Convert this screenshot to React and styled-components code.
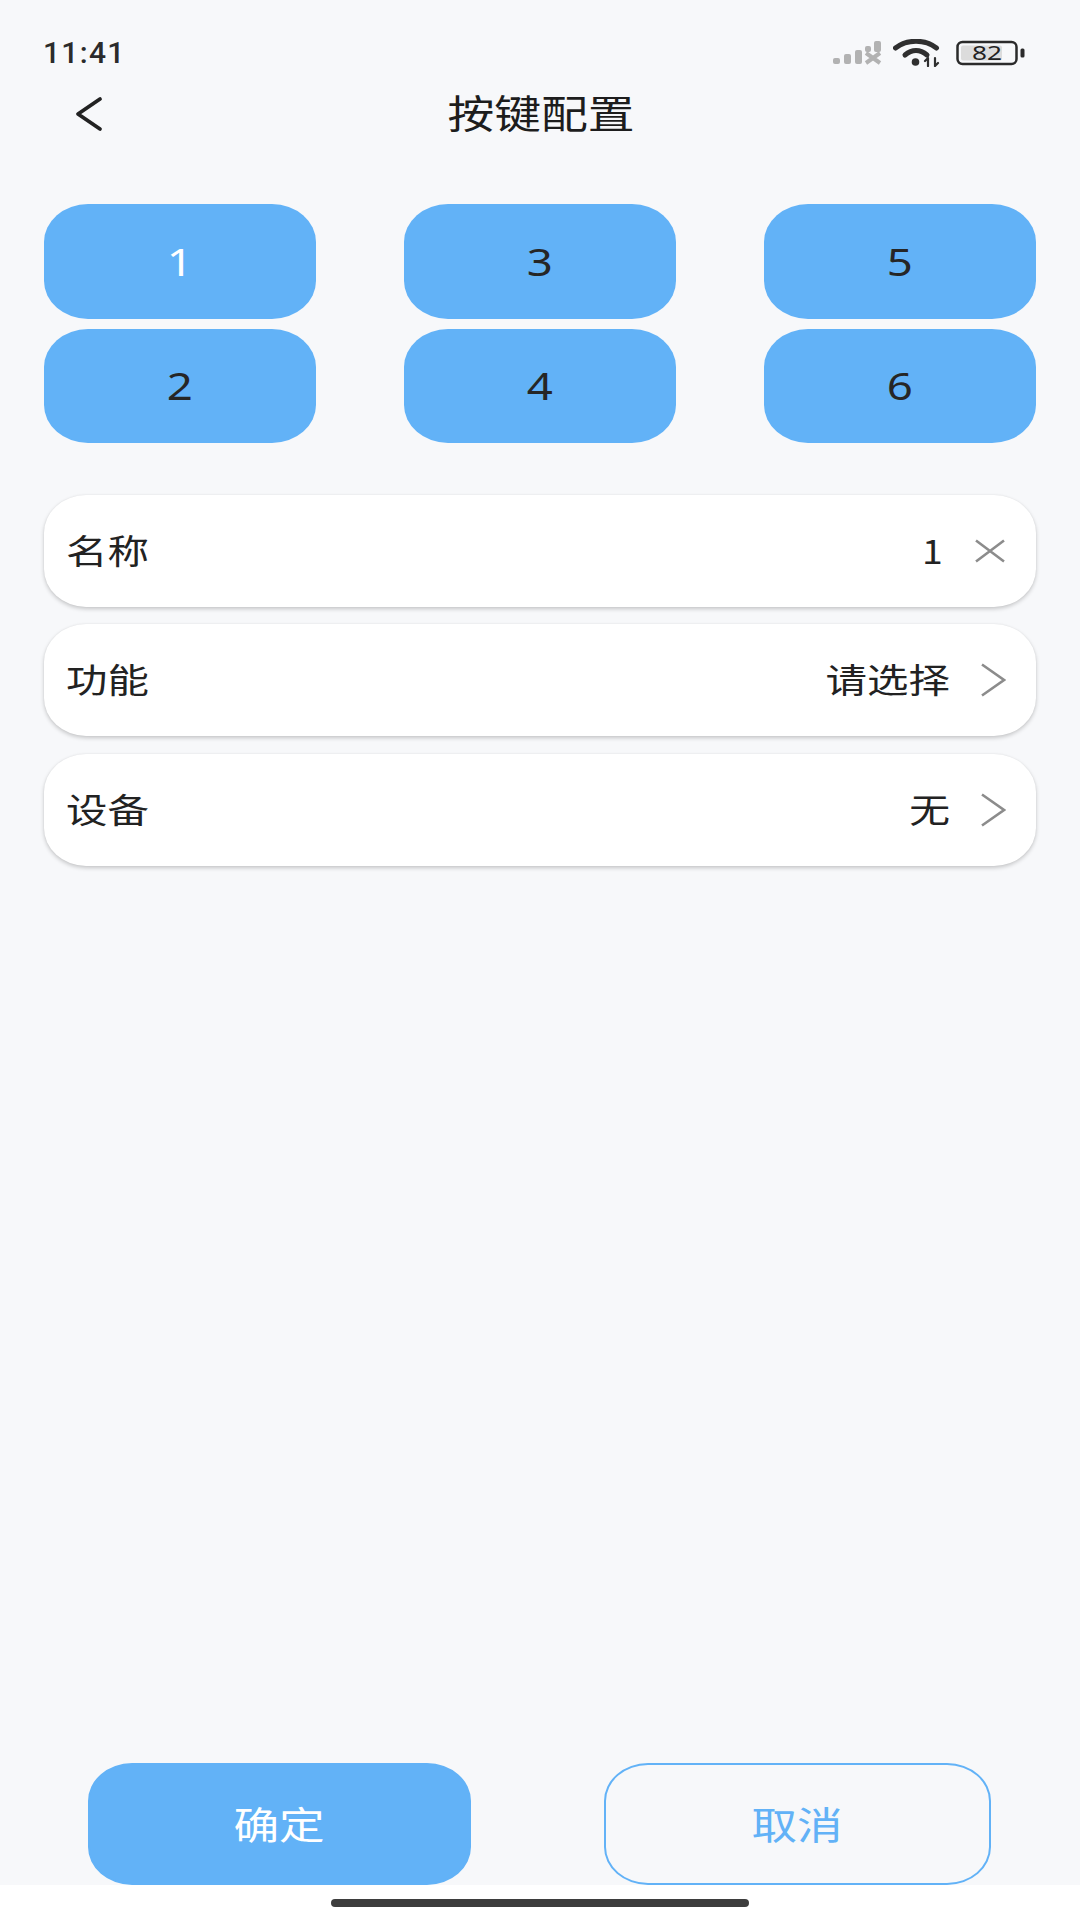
import React from 'react';
import styled, { createGlobalStyle } from 'styled-components';

const Global = createGlobalStyle`
  html, body { margin: 0; padding: 0; background: #f7f8fa; }
  * { box-sizing: border-box; }
  body { font-family: "Noto Sans CJK SC", "Noto Sans", sans-serif; }
`;

const Page = styled.div`
  width: 1080px; height: 1920px; display: flex; flex-direction: column;
  background: #f7f8fa; color: #222; overflow: hidden;
`;
const StatusBar = styled.div`
  height: 80px; padding: 26px 55px 0 43px; display: flex; align-items: center; justify-content: space-between;
`;
const Time = styled.span`
  font: 500 30px/1 Roboto, sans-serif; color: #2b2b2b; letter-spacing: 1.3px;
`;
const StatusIcons = styled.div`
  display: flex; align-items: center;
`;
const Nav = styled.div`
  height: 66px; position: relative; display: flex; align-items: center; justify-content: center;
`;
const Back = styled.svg`
  position: absolute; left: 74px; top: 16px; width: 30px; height: 36px;
`;
const Wide = styled.span`
  display: inline-block; transform: translateY(${p => p.$dy ?? -2}px) scaleX(${p => p.$sx || 1.2});
  transform-origin: ${p => p.$origin || 'center'}; white-space: nowrap;
`;
const Title = styled.div`
  font-size: 39px; line-height: 1; color: #1d1d1d; padding-left: 2px;
`;
const Grid = styled.div`
  margin: 58px 44px 0; display: grid; grid-template-columns: repeat(3, 272px); grid-template-rows: 115px 114px;
  grid-auto-flow: column; justify-content: space-between; row-gap: 10px;
`;
const KeyButton = styled.div`
  background: #62b2f7; border-radius: 44px / 38px; display: flex; align-items: center; justify-content: center;
  font: 400 38px/1 "Noto Sans", sans-serif; color: ${p => (p.$active ? '#fff' : '#262626')};
`;
const List = styled.div`
  margin: 52px 44px 0; display: flex; flex-direction: column; gap: 17px;
`;
const Row = styled.div`
  height: 112px; background: #fff; border-radius: 42px / 38px; padding: 0 30px 0 22px;
  display: flex; align-items: center; justify-content: space-between;
  box-shadow: 0 2px 4px rgba(0,0,0,.2), 0 0 2px rgba(0,0,0,.06);
  font-size: 34px; color: #222;
  & + & + & { margin-top: 1px; }
`;
const RowValue = styled.div`
  display: flex; align-items: center; gap: ${p => p.$gap || 30}px;
`;
const Bottom = styled.div`
  margin-top: auto; height: 122px; padding: 0 89px 0 88px; display: flex; justify-content: space-between;
`;
const ActionButton = styled.div`
  width: ${p => p.$w}px; border-radius: 44px / 38px; display: flex; align-items: center; justify-content: center; font-size: 38px;
  background: ${p => (p.$primary ? '#62b2f7' : 'transparent')};
  color: ${p => (p.$primary ? '#fff' : '#62b2f7')};
  border: 2px solid #62b2f7;
`;
const HomeStrip = styled.div`
  height: 35px; background: #fff; display: flex; justify-content: center; padding-top: 14px;
`;
const HomeBar = styled.div`
  width: 418px; height: 8px; border-radius: 4px; background: #3d3d3d;
`;

const Signal = () => (
  <svg width="60" height="24" viewBox="0 0 60 24" fill="#b2b2b2" style={{ flex: 'none' }}>
    <rect x="0" y="17" width="7" height="6" rx="2" />
    <rect x="11" y="13" width="7" height="10" rx="2" />
    <rect x="22" y="9" width="7" height="14" rx="2" />
    <rect x="32" y="5" width="6" height="6" rx="2" />
    <rect x="41" y="0" width="7" height="11" rx="2" />
    <path d="M33 12l14 10M47 12L33 22" stroke="#b2b2b2" strokeWidth="4" fill="none" />
  </svg>
);
const Wifi = () => (
  <svg width="63" height="28" viewBox="0 0 63 28" fill="none" stroke="#2f2f2f" strokeLinecap="round" style={{ flex: 'none' }}>
    <path d="M2.500 9C14 0 32 0 43.500 9" strokeWidth="5" />
    <path d="M12 16C19 10 27 10 34 16" strokeWidth="5" />
    <circle cx="22.500" cy="23" r="3.800" fill="#2f2f2f" stroke="none" />
    <path d="M35 19v8M35 19l-3 3M42 19v8M42 27l3-3" strokeWidth="2.200" />
  </svg>
);
const Battery = () => (
  <svg width="69" height="26" viewBox="0 0 69 26" style={{ flex: 'none' }}>
    <rect x="1.500" y="2" width="59" height="22" rx="5" fill="none" stroke="#2b2b2b" strokeWidth="2.500" />
    <rect x="5" y="5.500" width="41" height="15" rx="2" fill="#dcdcdc" />
    <rect x="64.500" y="8.500" width="4" height="9" rx="1.500" fill="#2b2b2b" />
    <text x="16" y="20" textLength="30" lengthAdjust="spacingAndGlyphs" fontFamily="Noto Sans, sans-serif" fontSize="20" fill="#222">82</text>
  </svg>
);
const Chevron = () => (
  <svg width="26" height="34" viewBox="0 0 26 34" fill="none" stroke="#8c8c8c" strokeWidth="2.600">
    <path d="M2 1.500L24 17 2 32.500" />
  </svg>
);
const Close = () => (
  <svg width="32" height="24" viewBox="0 0 32 24" fill="none" stroke="#8c8c8c" strokeWidth="2.600">
    <path d="M2 1.500L30 22.500M30 1.500L2 22.500" />
  </svg>
);

const keys = [1, 2, 3, 4, 5, 6];

export default function App() {
  return (
    <Page>
      <Global />
      <StatusBar>
        <Time>11:41</Time>
        <StatusIcons>
          <Signal />
          <Wifi />
          <Battery />
        </StatusIcons>
      </StatusBar>
      <Nav>
        <Back viewBox="0 0 30 36" fill="none" stroke="#222" strokeWidth="3.800" strokeLinecap="round" strokeLinejoin="round">
          <path d="M26 3L4 18l22 15" />
        </Back>
        <Title><Wide>按键配置</Wide></Title>
      </Nav>
      <Grid>
        {keys.map(k => (
          <KeyButton key={k} $active={k === 1}><Wide $dy={-1}>{k}</Wide></KeyButton>
        ))}
      </Grid>
      <List>
        <Row>
          <Wide $origin="left" $sx={1.22}>名称</Wide>
          <RowValue $gap={31}><Wide $origin="right" $sx={1.1}>1</Wide><Close /></RowValue>
        </Row>
        <Row>
          <Wide $origin="left" $sx={1.22}>功能</Wide>
          <RowValue><Wide $origin="right" $sx={1.22}>请选择</Wide><Chevron /></RowValue>
        </Row>
        <Row>
          <Wide $origin="left" $sx={1.22}>设备</Wide>
          <RowValue><Wide $origin="right" $sx={1.2}>无</Wide><Chevron /></RowValue>
        </Row>
      </List>
      <Bottom>
        <ActionButton $primary $w={383}><Wide>确定</Wide></ActionButton>
        <ActionButton $w={387}><Wide>取消</Wide></ActionButton>
      </Bottom>
      <HomeStrip><HomeBar /></HomeStrip>
    </Page>
  );
}
